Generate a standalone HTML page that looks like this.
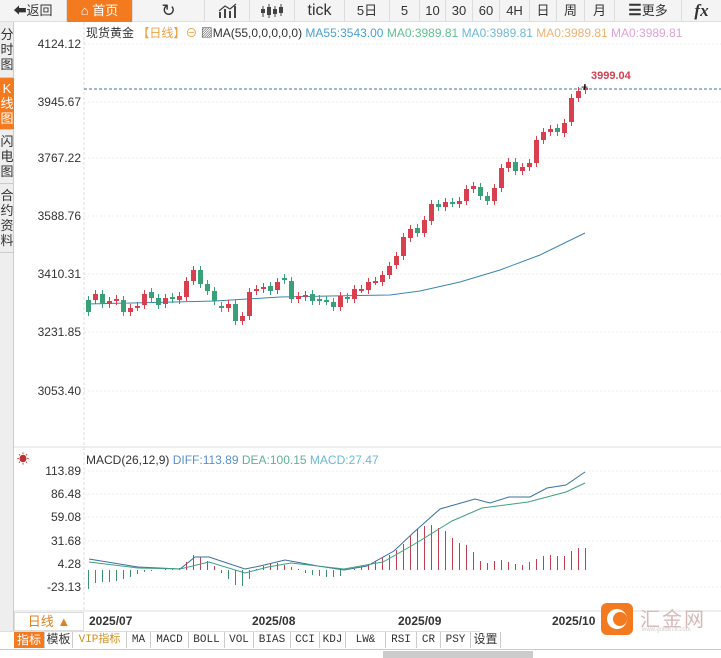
<!DOCTYPE html>
<html><head><meta charset="utf-8">
<style>
*{margin:0;padding:0;box-sizing:border-box}
body{width:721px;height:658px;overflow:hidden;background:#fff;font-family:"Liberation Sans","Noto Sans CJK SC",sans-serif;position:relative}
.tb{position:absolute;left:0;top:0;width:721px;height:22px;background:#f4f4f4;border-bottom:1px solid #ddd}
.tb div{position:absolute;top:0;height:22px;line-height:22px;font-size:13px;color:#333;text-align:center;border-right:1px solid #ddd}
.side{position:absolute;left:0;top:22px;width:14px;height:610px;background:#eee;border-right:1px solid #ccc}
.side div{font-size:13px;line-height:15px;color:#333;text-align:center;width:14px;border-bottom:1px solid #ccc;padding:3px 0}
.ax{position:absolute;right:640px;font-size:12px;color:#333;text-align:right}
.bt{position:absolute;top:632px;height:16px;line-height:16px;font-size:11px;color:#333;text-align:center;border-right:1px solid #ccc;font-family:"Liberation Mono","Noto Sans CJK SC",monospace}
</style></head><body>
<div class="tb">
<div style="left:0;width:67px">⬅返回</div>
<div style="left:67px;width:66px;background:#f47a20;color:#fff">⌂ 首页</div>
<div style="left:133px;width:72px;font-size:17px">↻</div>
<div style="left:205px;width:45px"><svg width="20" height="16" style="margin-top:3px"><g stroke="#444" stroke-width="2"><line x1="3" y1="15" x2="3" y2="9"/><line x1="8" y1="15" x2="8" y2="6"/><line x1="13" y1="15" x2="13" y2="8"/><line x1="18" y1="15" x2="18" y2="3"/></g><path d="M2,8 L8,3 L13,6 L19,1" fill="none" stroke="#444" stroke-width="1.3"/></svg></div>
<div style="left:250px;width:45px"><svg width="24" height="16" style="margin-top:3px"><g stroke="#444"><line x1="3" y1="3" x2="3" y2="14"/><line x1="9" y1="1" x2="9" y2="15"/><line x1="15" y1="3" x2="15" y2="14"/><line x1="21" y1="1" x2="21" y2="13"/></g><g fill="#444"><rect x="1" y="6" width="4" height="4"/><rect x="7" y="4" width="4" height="8"/><rect x="13" y="6" width="4" height="5"/><rect x="19" y="4" width="4" height="6"/></g></svg></div>
<div style="left:295px;width:50px;font-size:16px">tick</div>
<div style="left:345px;width:45px">5日</div>
<div style="left:390px;width:30px">5</div>
<div style="left:420px;width:26px">10</div>
<div style="left:446px;width:27px">30</div>
<div style="left:473px;width:27px">60</div>
<div style="left:500px;width:30px">4H</div>
<div style="left:530px;width:27px">日</div>
<div style="left:557px;width:28px">周</div>
<div style="left:585px;width:30px">月</div>
<div style="left:615px;width:67px"><b style="font-size:15px">☰</b>更多</div>
<div style="left:682px;width:39px;font-style:italic;font-weight:bold;font-family:'Liberation Serif',serif;font-size:17px;border:none">fx</div>
</div>
<div class="side">
<div style="padding:5px 0">分<br>时<br>图</div>
<div style="background:#f47a20;color:#fff;padding:3px 0">K<br>线<br>图</div>
<div style="padding:4px 0">闪<br>电<br>图</div>
<div style="padding:4px 0">合<br>约<br>资<br>料</div>
</div>
<div class="ax" style="top:37px">4124.12</div>
<div class="ax" style="top:95px">3945.67</div>
<div class="ax" style="top:151px">3767.22</div>
<div class="ax" style="top:209px">3588.76</div>
<div class="ax" style="top:267px">3410.31</div>
<div class="ax" style="top:325px">3231.85</div>
<div class="ax" style="top:384px">3053.40</div>
<div class="ax" style="top:464px">113.89</div>
<div class="ax" style="top:487px">86.48</div>
<div class="ax" style="top:510px">59.08</div>
<div class="ax" style="top:534px">31.68</div>
<div class="ax" style="top:557px">4.28</div>
<div class="ax" style="top:580px">-23.13</div>
<div style="position:absolute;left:86px;top:24px;font-size:12px;white-space:nowrap;color:#333">现货黄金 <span style="color:#f0a040">【日线】⊖</span> ▨MA(55,0,0,0,0,0) <span style="color:#4a9fd0">MA55:3543.00</span> <span style="color:#5fc090">MA0:3989.81</span> <span style="color:#6cb8d8">MA0:3989.81</span> <span style="color:#f0b070">MA0:3989.81</span> <span style="color:#e0a0d8">MA0:3989.81</span></div>
<div style="position:absolute;left:86px;top:453px;font-size:12px;white-space:nowrap;color:#333">MACD(26,12,9) <span style="color:#5a8fc8">DIFF:113.89</span> <span style="color:#5fb090">DEA:100.15</span> <span style="color:#6cb8d8">MACD:27.47</span></div>
<div style="position:absolute;left:17px;top:450px;color:#c03030;font-size:12px">☀</div>
<div style="position:absolute;left:591px;top:70px;color:#d04050;font-size:11px;font-weight:bold">3999.04</div>
<svg id="s" width="721" height="658" style="position:absolute;left:0;top:0">
<g stroke="#eee" stroke-dasharray="2,2">
<line x1="84" y1="44" x2="721" y2="44"/><line x1="84" y1="102" x2="721" y2="102"/><line x1="84" y1="158" x2="721" y2="158"/><line x1="84" y1="216" x2="721" y2="216"/><line x1="84" y1="274" x2="721" y2="274"/><line x1="84" y1="332" x2="721" y2="332"/><line x1="84" y1="391" x2="721" y2="391"/>
<line x1="84" y1="471" x2="721" y2="471"/><line x1="84" y1="494" x2="721" y2="494"/><line x1="84" y1="517" x2="721" y2="517"/><line x1="84" y1="541" x2="721" y2="541"/><line x1="84" y1="587" x2="721" y2="587"/>
</g>
<line x1="84" y1="22" x2="84" y2="612" stroke="#ddd" stroke-dasharray="3,2"/>
<line x1="14" y1="447" x2="721" y2="447" stroke="#ddd"/>
<line x1="14" y1="611" x2="721" y2="611" stroke="#ddd"/>
<line x1="84" y1="89" x2="721" y2="89" stroke="#3a7a9a" stroke-dasharray="3,2"/>
<path d="M88,304 L215,301 L280,297 L330,296 L390,295 L420,291 L460,282 L500,270 L540,255 L585,233" fill="none" stroke="#3a86b0" stroke-width="1"/>
<g id="c"></g>
<path d="M89,559 L138,567 L180,569 L195,557 L209,557 L245,569 L260,566 L285,560 L318,566 L344,570 L367,566 L394,551 L413,533 L440,509 L475,499 L490,503 L509,497 L530,497 L547,488 L566,485 L585,472" fill="none" stroke="#3a70a0"/>
<path d="M89,562 L138,568 L180,569 L209,562 L245,573 L268,567 L291,563 L344,569 L383,562 L413,545 L452,521 L482,508 L528,502 L566,492 L585,483" fill="none" stroke="#40a080"/>
<text x="581" y="91" font-size="12" fill="#000">+</text>
</svg>
<div style="position:absolute;left:14px;top:612px;width:70px;height:19px;border:1px solid #ddd;color:#e08020;font-size:13px;line-height:18px;text-align:center">日线 ▲</div>
<div style="position:absolute;left:89px;top:614px;font-size:12px;font-weight:bold;color:#333">2025/07</div>
<div style="position:absolute;left:252px;top:614px;font-size:12px;font-weight:bold;color:#333">2025/08</div>
<div style="position:absolute;left:398px;top:614px;font-size:12px;font-weight:bold;color:#333">2025/09</div>
<div style="position:absolute;left:552px;top:614px;font-size:12px;font-weight:bold;color:#333">2025/10</div>
<div style="position:absolute;left:601px;top:603px;width:32px;height:32px;background:#f47a20;border-radius:6px"><div style="position:absolute;left:6px;top:6px;width:20px;height:20px;border-radius:50%;background:#fff"></div><div style="position:absolute;left:12px;top:9px;width:14px;height:14px;border-radius:50%;background:#f47a20"></div></div>
<div style="position:absolute;left:640px;top:603px;font-size:20px;color:#d8b8b8;letter-spacing:2px">汇金网</div>
<div style="position:absolute;left:642px;top:627px;font-size:6px;color:#ccc">www.gold678.com</div>
<div style="position:absolute;left:0;top:631px;width:480px;height:1px;background:#ddd"></div>
<div class="bt" style="left:14px;width:31px;background:#f47a20;color:#fff;font-family:'Liberation Sans','Noto Sans CJK SC',sans-serif;font-size:12px">指标</div>
<div class="bt" style="left:45px;width:28px;font-size:12px">模板</div>
<div class="bt" style="left:73px;width:54px;color:#d09020">VIP指标</div>
<div class="bt" style="left:127px;width:24px">MA</div>
<div class="bt" style="left:151px;width:38px">MACD</div>
<div class="bt" style="left:189px;width:36px">BOLL</div>
<div class="bt" style="left:225px;width:29px">VOL</div>
<div class="bt" style="left:254px;width:37px">BIAS</div>
<div class="bt" style="left:291px;width:29px">CCI</div>
<div class="bt" style="left:320px;width:26px">KDJ</div>
<div class="bt" style="left:346px;width:40px">LW&amp;</div>
<div class="bt" style="left:386px;width:31px">RSI</div>
<div class="bt" style="left:417px;width:24px">CR</div>
<div class="bt" style="left:441px;width:30px">PSY</div>
<div class="bt" style="left:471px;width:30px;font-size:12px">设置</div>
<div style="position:absolute;left:0;top:649px;width:721px;height:1px;background:#ccc"></div>
<div style="position:absolute;left:383px;top:651px;width:150px;height:7px;background:#ccc"></div>
<script>
var d=[[300,312],[300,294],[294,304],[304,301],[301,299],[300,312],[312,308],[307,306],[305,294],[292,298],[298,305],[304,298],[297,299],[300,296],[297,281],[281,270],[270,284],[284,291],[291,301],[306,308],[308,304],[304,321],[321,316],[316,292],[291,289],[289,287],[286,291],[290,282],[278,280],[281,299],[299,296],[297,295],[294,301],[299,301],[300,301],[302,307],[307,296],[297,299],[299,289],[289,289],[290,282],[281,281],[282,275],[275,266],[265,256],[256,237],[238,229],[228,233],[233,220],[221,204],[204,207],[207,202],[202,203],[204,201],[201,189],[189,186],[187,196],[196,201],[201,188],[188,168],[168,162],[162,171],[171,167],[167,163],[163,140],[140,132],[132,129],[128,132],[133,123],[122,98],[98,91],[90,88]];
var h=[-19,-13,-12,-12,-11,-9,-7,-4,-2,-1,0,1,1,2,8,15,13,9,4,-3,-9,-15,-16,-9,1,4,6,7,5,3,1,-3,-5,-6,-7,-7,-6,0,1,3,6,9,13,15,20,26,34,41,44,45,42,39,32,27,25,18,9,7,9,10,8,6,5,8,11,14,15,14,14,19,22,22];
var s='';
for(var i=0;i<d.length;i++){var x=88+i*7,o=d[i][0],c=d[i][1],up=c<=o,col=up?'#d9404f':'#3aa07a';
var t=Math.min(o,c),b=Math.max(o,c);
s+='<line x1="'+(x+0.5)+'" y1="'+(t-4)+'" x2="'+(x+0.5)+'" y2="'+(b+4)+'" stroke="'+col+'"/>';
s+='<rect x="'+(x-2)+'" y="'+t+'" width="5" height="'+Math.max(2,b-t)+'" fill="'+col+'"/>';
var v=h[i];s+='<line x1="'+(x+0.5)+'" y1="570" x2="'+(x+0.5)+'" y2="'+(570-v)+'" stroke="'+(v>=0?'#c04050':'#3a9070')+'"/>';}
document.getElementById('c').innerHTML=s;
</script>
</body></html>
